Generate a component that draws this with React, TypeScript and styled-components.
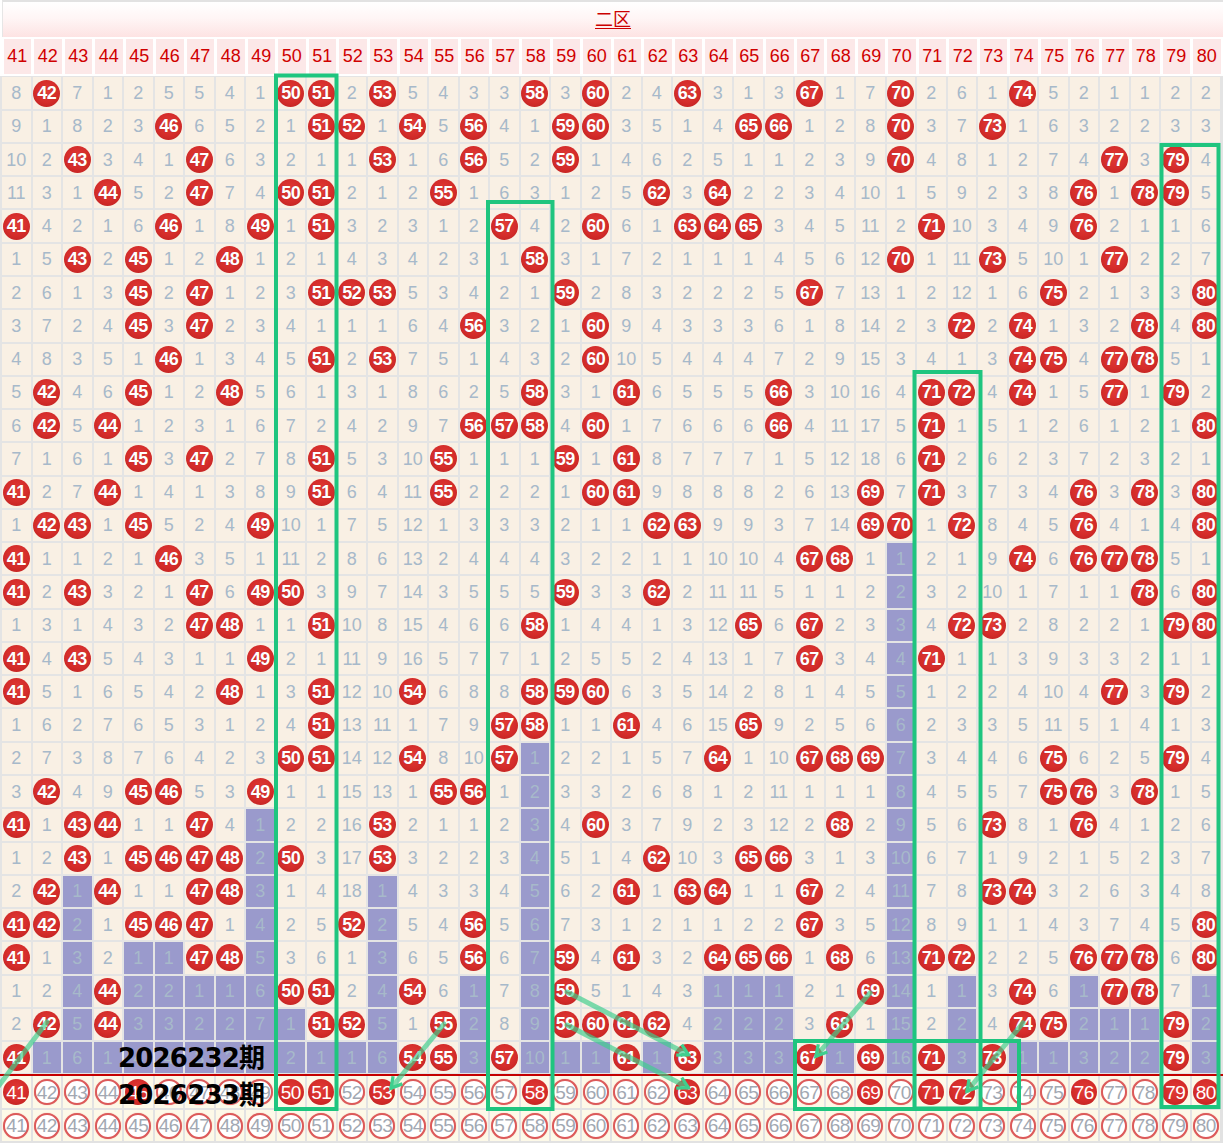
import React from 'react';
import styled, { createGlobalStyle } from 'styled-components';

const START = 41;
const COLS = Array.from({ length: 40 }, (_, i) => START + i);

const ROWS: number[][] = [
  [8,42,7,1,2,5,5,4,1,50,51,2,53,5,4,3,3,58,3,60,2,4,63,3,1,3,67,1,7,70,2,6,1,74,5,2,1,1,2,2],
  [9,1,8,2,3,46,6,5,2,1,51,52,1,54,5,56,4,1,59,60,3,5,1,4,65,66,1,2,8,70,3,7,73,1,6,3,2,2,3,3],
  [10,2,43,3,4,1,47,6,3,2,1,1,53,1,6,56,5,2,59,1,4,6,2,5,1,1,2,3,9,70,4,8,1,2,7,4,77,3,79,4],
  [11,3,1,44,5,2,47,7,4,50,51,2,1,2,55,1,6,3,1,2,5,62,3,64,2,2,3,4,10,1,5,9,2,3,8,76,1,78,79,5],
  [41,4,2,1,6,46,1,8,49,1,51,3,2,3,1,2,57,4,2,60,6,1,63,64,65,3,4,5,11,2,71,10,3,4,9,76,2,1,1,6],
  [1,5,43,2,45,1,2,48,1,2,1,4,3,4,2,3,1,58,3,1,7,2,1,1,1,4,5,6,12,70,1,11,73,5,10,1,77,2,2,7],
  [2,6,1,3,45,2,47,1,2,3,51,52,53,5,3,4,2,1,59,2,8,3,2,2,2,5,67,7,13,1,2,12,1,6,75,2,1,3,3,80],
  [3,7,2,4,45,3,47,2,3,4,1,1,1,6,4,56,3,2,1,60,9,4,3,3,3,6,1,8,14,2,3,72,2,74,1,3,2,78,4,80],
  [4,8,3,5,1,46,1,3,4,5,51,2,53,7,5,1,4,3,2,60,10,5,4,4,4,7,2,9,15,3,4,1,3,74,75,4,77,78,5,1],
  [5,42,4,6,45,1,2,48,5,6,1,3,1,8,6,2,5,58,3,1,61,6,5,5,5,66,3,10,16,4,71,72,4,74,1,5,77,1,79,2],
  [6,42,5,44,1,2,3,1,6,7,2,4,2,9,7,56,57,58,4,60,1,7,6,6,6,66,4,11,17,5,71,1,5,1,2,6,1,2,1,80],
  [7,1,6,1,45,3,47,2,7,8,51,5,3,10,55,1,1,1,59,1,61,8,7,7,7,1,5,12,18,6,71,2,6,2,3,7,2,3,2,1],
  [41,2,7,44,1,4,1,3,8,9,51,6,4,11,55,2,2,2,1,60,61,9,8,8,8,2,6,13,69,7,71,3,7,3,4,76,3,78,3,80],
  [1,42,43,1,45,5,2,4,49,10,1,7,5,12,1,3,3,3,2,1,1,62,63,9,9,3,7,14,69,70,1,72,8,4,5,76,4,1,4,80],
  [41,1,1,2,1,46,3,5,1,11,2,8,6,13,2,4,4,4,3,2,2,1,1,10,10,4,67,68,1,1,2,1,9,74,6,76,77,78,5,1],
  [41,2,43,3,2,1,47,6,49,50,3,9,7,14,3,5,5,5,59,3,3,62,2,11,11,5,1,1,2,2,3,2,10,1,7,1,1,78,6,80],
  [1,3,1,4,3,2,47,48,1,1,51,10,8,15,4,6,6,58,1,4,4,1,3,12,65,6,67,2,3,3,4,72,73,2,8,2,2,1,79,80],
  [41,4,43,5,4,3,1,1,49,2,1,11,9,16,5,7,7,1,2,5,5,2,4,13,1,7,67,3,4,4,71,1,1,3,9,3,3,2,1,1],
  [41,5,1,6,5,4,2,48,1,3,51,12,10,54,6,8,8,58,59,60,6,3,5,14,2,8,1,4,5,5,1,2,2,4,10,4,77,3,79,2],
  [1,6,2,7,6,5,3,1,2,4,51,13,11,1,7,9,57,58,1,1,61,4,6,15,65,9,2,5,6,6,2,3,3,5,11,5,1,4,1,3],
  [2,7,3,8,7,6,4,2,3,50,51,14,12,54,8,10,57,1,2,2,1,5,7,64,1,10,67,68,69,7,3,4,4,6,75,6,2,5,79,4],
  [3,42,4,9,45,46,5,3,49,1,1,15,13,1,55,56,1,2,3,3,2,6,8,1,2,11,1,1,1,8,4,5,5,7,75,76,3,78,1,5],
  [41,1,43,44,1,1,47,4,1,2,2,16,53,2,1,1,2,3,4,60,3,7,9,2,3,12,2,68,2,9,5,6,73,8,1,76,4,1,2,6],
  [1,2,43,1,45,46,47,48,2,50,3,17,53,3,2,2,3,4,5,1,4,62,10,3,65,66,3,1,3,10,6,7,1,9,2,1,5,2,3,7],
  [2,42,1,44,1,1,47,48,3,1,4,18,1,4,3,3,4,5,6,2,61,1,63,64,1,1,67,2,4,11,7,8,73,74,3,2,6,3,4,8],
  [41,42,2,1,45,46,47,1,4,2,5,52,2,5,4,56,5,6,7,3,1,2,1,1,2,2,67,3,5,12,8,9,1,1,4,3,7,4,5,80],
  [41,1,3,2,1,1,47,48,5,3,6,1,3,6,5,56,6,7,59,4,61,3,2,64,65,66,1,68,6,13,71,72,2,2,5,76,77,78,6,80],
  [1,2,4,44,2,2,1,1,6,50,51,2,4,54,6,1,7,8,59,5,1,4,3,1,1,1,2,1,69,14,1,1,3,74,6,1,77,78,7,1],
  [2,42,5,44,3,3,2,2,7,1,51,52,5,1,55,2,8,9,59,60,61,62,4,2,2,2,3,68,1,15,2,2,4,74,75,2,1,1,79,2],
  [41,1,6,1,4,4,3,3,8,2,1,1,6,54,55,3,57,10,1,1,61,1,63,3,3,3,67,1,69,16,71,3,73,1,1,3,2,2,79,3],
];

const NEXT_PICKS = new Set([41, 45, 50, 51, 53, 58, 63, 69, 71, 72, 76, 79, 80]);

const lastHit = COLS.map((c, ci) => {
  let last = -1;
  ROWS.forEach((row, ri) => {
    if (row[ci] === c) last = ri;
  });
  return last;
});

const GlobalStyle = createGlobalStyle`
  html, body { margin: 0; padding: 0; background: #ffffff; }
  body { font-family: "Liberation Sans", Arial, sans-serif; }
  #root { width: 1223px; }
`;

const Chart = styled.div`
  position: relative;
  width: 1223px;
  height: 1145px;
  overflow: hidden;
  background: #ffffff;
`;

const TitleRow = styled.div`
  box-sizing: border-box;
  height: 37px;
  margin-left: 2px;
  border-top: 2px solid #e2e2e2;
  border-left: 1px solid #e6e6e6;
  display: flex;
  align-items: center;
  justify-content: center;
  background: linear-gradient(#ffffff 0%, #fff6f6 45%, #fde3e3 100%);
`;

const TitleLink = styled.a`
  color: #cc0000;
  font-size: 18px;
  font-family: "Noto Sans CJK SC", "Liberation Sans", sans-serif;
  text-decoration: underline;
  text-underline-offset: 2px;
  line-height: 1;
  margin-top: -4px;
`;

const HeaderRow = styled.div`
  box-sizing: border-box;
  height: 39px;
  padding: 2px 2.5px 2px 3.5px;
  display: grid;
  grid-template-columns: repeat(40, 1fr);
  column-gap: 3px;
  background: #ffffff;
`;

const HeaderCell = styled.div`
  display: flex;
  align-items: center;
  justify-content: center;
  background: #fce8e8;
  color: #d00000;
  font-size: 18px;
`;

const DataGrid = styled.div`
  box-sizing: border-box;
  padding: 1.4px 3px 1px 2px;
  display: grid;
  grid-template-columns: repeat(40, 1fr);
  grid-auto-rows: 31.28px;
  gap: 2px;
  background: #e4e4e4;
`;

const Cell = styled.div<{ $purple: boolean }>`
  display: flex;
  align-items: center;
  justify-content: center;
  background: ${(p) => (p.$purple ? '#9a9acc' : '#f9f0e4')};
  color: #a7b9ca;
  font-size: 18px;
  line-height: 1;
`;

const Ball = styled.span`
  width: 27px;
  height: 27px;
  border-radius: 50%;
  display: flex;
  align-items: center;
  justify-content: center;
  background: radial-gradient(circle at 50% 42%, #e23b37 0%, #d42c2a 55%, #b81e1e 100%);
  color: #ffffff;
  font-weight: bold;
  font-size: 18px;
  letter-spacing: -0.4px;
  text-shadow: 0 0 1px rgba(90, 0, 0, 0.4);
`;

const BottomGrid = styled.div`
  box-sizing: border-box;
  border-top: 2px solid #c40000;
  padding: 0 3px 2px 2px;
  display: grid;
  grid-template-columns: repeat(40, 1fr);
  grid-auto-rows: 31.5px;
  gap: 2px;
  background: #e2e2e2;
`;

const BottomCell = styled.div`
  display: flex;
  align-items: center;
  justify-content: center;
  background: #fdf9e8;
`;

const Ring = styled.span<{ $filled: boolean }>`
  box-sizing: border-box;
  width: 26px;
  height: 26px;
  border-radius: 50%;
  display: flex;
  align-items: center;
  justify-content: center;
  font-size: 19px;
  letter-spacing: -0.6px;
  line-height: 1;
  color: ${(p) => (p.$filled ? '#ffffff' : '#a2a8b2')};
  background: ${(p) =>
    p.$filled
      ? 'radial-gradient(circle at 50% 42%, #e23b37 0%, #d42c2a 55%, #b81e1e 100%)'
      : '#ffffff'};
  border: ${(p) => (p.$filled ? 'none' : '2px solid #dc5a5a')};
  box-shadow: ${(p) => (p.$filled ? 'none' : '0 0 1px rgba(220, 80, 80, 0.6)')};
`;

const PeriodLabel = styled.div<{ $top: number }>`
  position: absolute;
  left: 118px;
  top: ${(p) => p.$top}px;
  font-family: "DejaVu Sans", "Noto Sans CJK SC", sans-serif;
  font-weight: bold;
  font-size: 26px;
  line-height: 30px;
  letter-spacing: -0.8px;
  color: #000000;
  white-space: nowrap;
  pointer-events: none;
`;

const Overlay = styled.svg`
  position: absolute;
  left: 0;
  top: 0;
  pointer-events: none;
`;

const RECTS = [
  { x: 276, y: 75.5, x2: 336.5, y2: 1109 },
  { x: 488, y: 202, x2: 552.5, y2: 1109 },
  { x: 914.5, y: 372, x2: 980.5, y2: 1108.5 },
  { x: 1161.5, y: 145, x2: 1218.5, y2: 1107 },
  { x: 795, y: 1041, x2: 1019, y2: 1109 },
];

const ARROWS = [
  { x1: 870, y1: 993, x2: 817, y2: 1055, head: true },
  { x1: 1023, y1: 1023, x2: 968, y2: 1090, head: true },
  { x1: 444, y1: 1024, x2: 392, y2: 1087, head: true },
  { x1: 567, y1: 992, x2: 687, y2: 1054, head: true },
  { x1: 567, y1: 1025, x2: 687, y2: 1087, head: true },
  { x1: 47, y1: 1022, x2: -6, y2: 1092, head: false },
];

function Annotations() {
  return (
    <Overlay width={1223} height={1145} viewBox="0 0 1223 1145">
      <defs>
        <marker
          id="arrowhead"
          viewBox="0 0 10 10"
          refX="7"
          refY="5"
          markerWidth="3"
          markerHeight="3"
          orient="auto"
        >
          <path d="M1,1 L8,5 L1,9" fill="none" stroke="#3fcf8e" strokeWidth="2.2" />
        </marker>
      </defs>
      {ARROWS.map((a, i) => (
        <line
          key={`a${i}`}
          x1={a.x1}
          y1={a.y1}
          x2={a.x2}
          y2={a.y2}
          stroke="#3fcf8e"
          strokeOpacity={0.68}
          strokeWidth={5}
          strokeLinecap="round"
          markerEnd={a.head ? 'url(#arrowhead)' : undefined}
        />
      ))}
      {RECTS.map((r, i) => (
        <rect
          key={`r${i}`}
          x={r.x}
          y={r.y}
          width={r.x2 - r.x}
          height={r.y2 - r.y}
          fill="none"
          stroke="#1fc57f"
          strokeWidth={4}
        />
      ))}
    </Overlay>
  );
}

export default function App() {
  return (
    <>
      <GlobalStyle />
      <Chart>
        <TitleRow>
          <TitleLink href="#">二区</TitleLink>
        </TitleRow>
        <HeaderRow>
          {COLS.map((c) => (
            <HeaderCell key={c}>{c}</HeaderCell>
          ))}
        </HeaderRow>
        <DataGrid>
          {ROWS.map((row, ri) =>
            row.map((v, ci) => {
              const col = COLS[ci];
              const hit = v === col;
              return (
                <Cell key={`${ri}-${ci}`} $purple={ri > lastHit[ci]}>
                  {hit ? <Ball>{v}</Ball> : v}
                </Cell>
              );
            })
          )}
        </DataGrid>
        <BottomGrid>
          {COLS.map((c) => (
            <BottomCell key={`n${c}`}>
              <Ring $filled={NEXT_PICKS.has(c)}>{c}</Ring>
            </BottomCell>
          ))}
          {COLS.map((c) => (
            <BottomCell key={`e${c}`}>
              <Ring $filled={false}>{c}</Ring>
            </BottomCell>
          ))}
        </BottomGrid>
        <PeriodLabel $top={1043}>2026232期</PeriodLabel>
        <PeriodLabel $top={1080}>2026233期</PeriodLabel>
        <Annotations />
      </Chart>
    </>
  );
}
